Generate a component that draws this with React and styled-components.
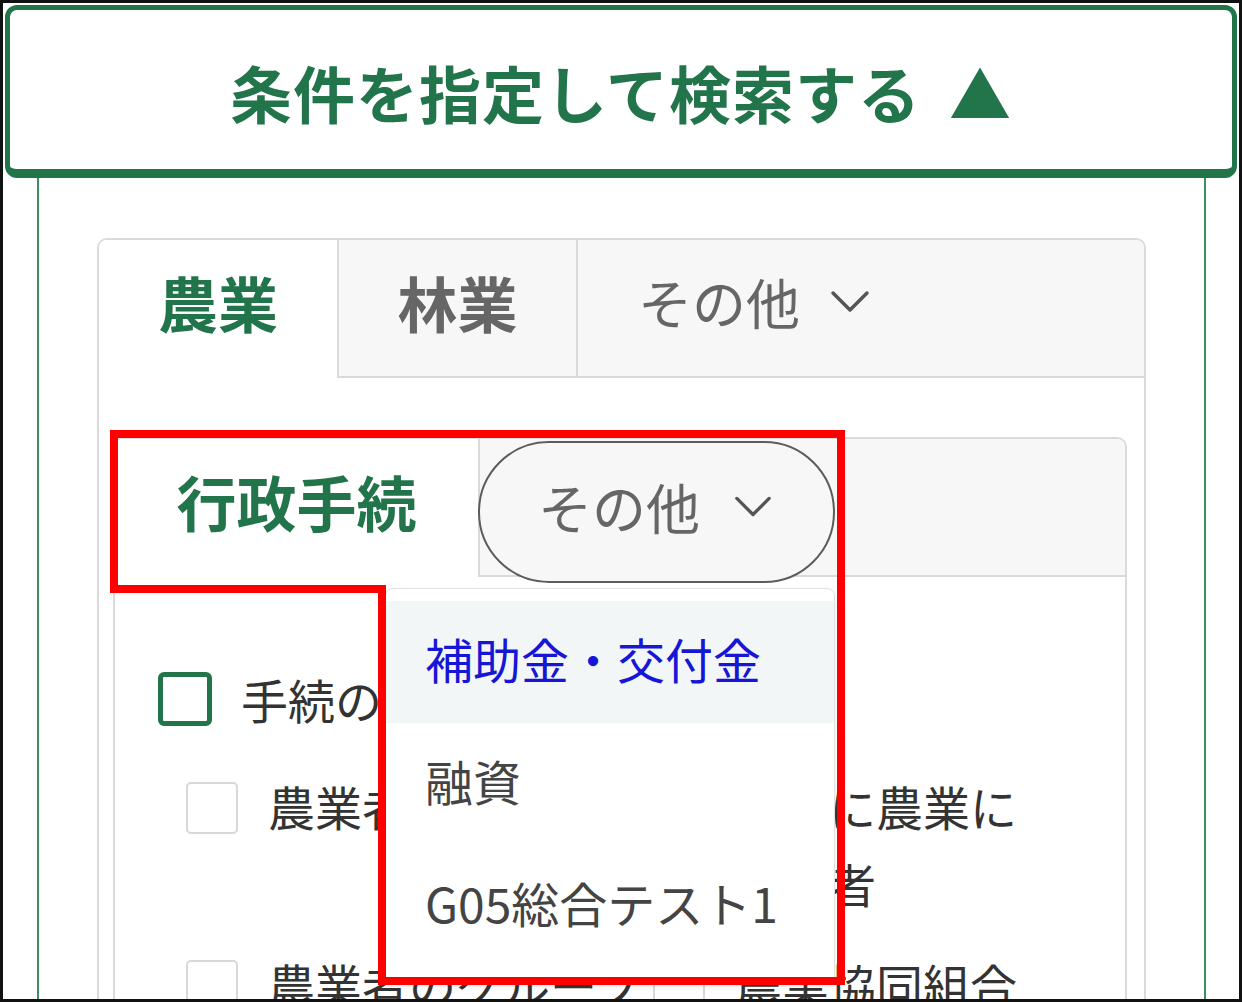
import React from "react";
import styled, { createGlobalStyle } from "styled-components";

const GREEN = "#22744a";
const LINE_GREEN = "#3a8f60";
const GRAY_BORDER = "#dadada";
const TAB_BG = "#f7f7f7";
const FONT = `"Noto Sans CJK JP", "Noto Sans", sans-serif`;

const Global = createGlobalStyle`
  html, body { margin: 0; padding: 0; background: #fff; }
  body { width: 1242px; height: 1002px; overflow: hidden; font-family: ${FONT}; }
  * { box-sizing: border-box; }
`;

const Page = styled.div`
  position: relative;
  width: 1242px;
  height: 1002px;
`;

const Frame = styled.div`
  width: 100%;
  height: 100%;
  border: 3px solid #111;
  padding: 2px 2px 0;
  display: flex;
  flex-direction: column;
  overflow: hidden;
  background: #fff;
`;

const Header = styled.div`
  flex-shrink: 0;
  height: 173px;
  border: 5px solid ${GREEN};
  border-bottom-width: 9px;
  border-radius: 12px;
  display: flex;
  align-items: center;
  justify-content: center;
  padding-top: 4px;
  color: ${GREEN};
  font-weight: 700;
  font-size: 62px;
  letter-spacing: 1px;
`;

const Arrow = styled.span`
  margin-left: 28px;
`;

const Panel = styled.div`
  flex: 1;
  margin: 0 31px 0 32px;
  border-left: 2px solid ${LINE_GREEN};
  border-right: 2px solid ${LINE_GREEN};
  padding: 60px 58px 0;
  display: flex;
  flex-direction: column;
`;

const TabBox = styled.div`
  flex: 1;
  border: 2px solid ${GRAY_BORDER};
  border-bottom: none;
  border-radius: 10px 10px 0 0;
  display: flex;
  flex-direction: column;
`;

const TabBar = styled.div`
  display: flex;
  height: 138px;
  flex-shrink: 0;
`;

const Tab = styled.div`
  flex: ${(p) => (p.$grow ? 1 : "none")};
  width: ${(p) => (p.$w ? `${p.$w}px` : "auto")};
  display: flex;
  align-items: center;
  justify-content: ${(p) => (p.$grow ? "flex-start" : "center")};
  padding-left: ${(p) => (p.$grow ? "60px" : "0")};
  padding-bottom: 14px;
  gap: 30px;
  background: ${(p) => (p.$active ? "#fff" : TAB_BG)};
  border-left: ${(p) => (p.$first ? "none" : `2px solid ${GRAY_BORDER}`)};
  border-bottom: 2px solid ${(p) => (p.$active ? "transparent" : GRAY_BORDER)};
  border-top-left-radius: ${(p) => (p.$first ? "8px" : "0")};
  border-top-right-radius: ${(p) => (p.$grow ? "8px" : "0")};
  font-size: ${(p) => (p.$light ? "54px" : "60px")};
  font-weight: ${(p) => (p.$light ? 400 : 700)};
  color: ${(p) => (p.$active ? GREEN : "#666")};
`;

const TabBody = styled.div`
  flex: 1;
  padding: 59px 17px 0 14px;
  display: flex;
  flex-direction: column;
`;

const DropTab = styled.div`
  position: relative;
  flex: 1;
  display: flex;
  align-items: flex-start;
  background: ${TAB_BG};
  border-left: 2px solid ${GRAY_BORDER};
  border-bottom: 2px solid ${GRAY_BORDER};
  border-top-right-radius: 8px;
`;

const Pill = styled.div`
  position: relative;
  z-index: 1;
  flex-shrink: 0;
  width: 357px;
  height: 142px;
  margin: 2px 0 0 -2px;
  border: 2px solid #5c5c5c;
  border-radius: 71px;
  background: ${TAB_BG};
  display: flex;
  align-items: center;
  gap: 34px;
  padding: 0 0 12px 58px;
  font-size: 54px;
  color: #666;
`;

const Menu = styled.div`
  position: absolute;
  z-index: 2;
  left: -95px;
  top: 149px;
  width: 450px;
  height: 397px;
  background: #fff;
  border: 1px solid #e2e2e2;
  border-radius: 8px;
  box-shadow: 0 2px 6px rgba(0, 0, 0, 0.08);
  padding-top: 12px;
`;

const MenuItem = styled.div`
  height: 122px;
  display: flex;
  align-items: center;
  padding: 0 0 8px 39px;
  font-size: 48px;
  color: ${(p) => (p.$hover ? "#1616d6" : "#444")};
  background: ${(p) => (p.$hover ? "#f3f6f6" : "transparent")};
  white-space: nowrap;
`;

const CheckArea = styled.div`
  flex: 1;
  padding: 83px 0 0 43px;
`;

const HeadRow = styled.div`
  display: flex;
  align-items: center;
  gap: 29px;
  height: 77px;
`;

const GreenBox = styled.span`
  width: 54px;
  height: 54px;
  border: 5px solid ${GREEN};
  border-radius: 6px;
  flex-shrink: 0;
`;

const Label = styled.span`
  font-size: 47px;
  line-height: 77px;
  color: #333;
  max-width: ${(p) => (p.$narrow ? "290px" : "none")};
  white-space: ${(p) => (p.$narrow ? "normal" : "nowrap")};
`;

const Grid = styled.div`
  display: grid;
  grid-template-columns: 467px 1fr;
  row-gap: 24px;
  margin: 30px 0 0 28px;
`;

const Item = styled.div`
  display: flex;
  align-items: flex-start;
  gap: 30px;
`;

const Box = styled.span`
  width: 52px;
  height: 52px;
  margin-top: 15px;
  border: 2px solid #d8d8d8;
  border-radius: 5px;
  flex-shrink: 0;
  background: #fff;
`;

const Annotation = styled.svg`
  position: absolute;
  left: 0;
  top: 0;
  pointer-events: none;
  z-index: 10;
`;

const Chevron = ({ w = 40, h = 24 }) => (
  <svg width={w} height={h} viewBox="0 0 40 24" fill="none">
    <polyline
      points="3,4 20,21 37,4"
      stroke="#555"
      strokeWidth="3.5"
      strokeLinecap="round"
      strokeLinejoin="round"
    />
  </svg>
);

export default function App() {
  return (
    <Page>
      <Global />
      <Frame>
        <Header>
          条件を指定して検索する<Arrow>▲</Arrow>
        </Header>
        <Panel>
          <TabBox>
            <TabBar>
              <Tab $active $first $w={238}>農業</Tab>
              <Tab $w={239}>林業</Tab>
              <Tab $grow $light>
                その他 <Chevron />
              </Tab>
            </TabBar>
            <TabBody>
              <TabBox>
                <TabBar>
                  <Tab $active $first $w={363}>行政手続</Tab>
                  <DropTab>
                    <Pill>
                      その他 <Chevron w={38} h={24} />
                    </Pill>
                    <Menu>
                      <MenuItem $hover>補助金・交付金</MenuItem>
                      <MenuItem>融資</MenuItem>
                      <MenuItem>G05総合テスト1</MenuItem>
                    </Menu>
                  </DropTab>
                </TabBar>
                <CheckArea>
                  <HeadRow>
                    <GreenBox />
                    <Label>手続の種類</Label>
                  </HeadRow>
                  <Grid>
                    <Item>
                      <Box />
                      <Label>農業者（個人）</Label>
                    </Item>
                    <Item>
                      <Box />
                      <Label $narrow>一緒に農業に従事者</Label>
                    </Item>
                    <Item>
                      <Box />
                      <Label>農業者のグループ</Label>
                    </Item>
                    <Item>
                      <Box />
                      <Label>農業協同組合</Label>
                    </Item>
                  </Grid>
                </CheckArea>
              </TabBox>
            </TabBody>
          </TabBox>
        </Panel>
      </Frame>
      <Annotation width="1242" height="1002" viewBox="0 0 1242 1002">
        <polygon
          points="114,434 841,434 841,981 382,981 382,589 114,589"
          fill="none"
          stroke="#ff0000"
          strokeWidth="8"
          strokeLinejoin="miter"
        />
      </Annotation>
    </Page>
  );
}
